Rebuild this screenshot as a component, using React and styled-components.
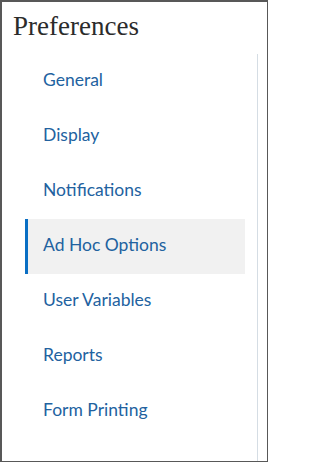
import React from 'react'
import styled, { createGlobalStyle } from 'styled-components'

const GlobalStyle = createGlobalStyle`
    html, body {
        margin: 0;
        padding: 0;
        background: #ffffff;
    }
    * {
        box-sizing: border-box;
    }
`;

const Panel = styled.div`
    width: 268px;
    height: 462px;
    border-style: solid;
    border-color: #585858;
    border-width: 2px 1px 1px 2px;
    display: flex;
    flex-direction: column;
    background: #ffffff;
    overflow: hidden;
`;

const Title = styled.h1`
    margin: 0;
    height: 52px;
    padding: 9px 0 0 11px;
    font-family: "Liberation Serif", "Times New Roman", serif;
    font-weight: normal;
    font-size: 27px;
    line-height: 30px;
    color: #2b2b2b;
`;

const Body = styled.div`
    flex: 1;
    display: flex;
    align-items: stretch;
`;

const Nav = styled.ul`
    list-style: none;
    margin: 0;
    padding: 0 12px 0 23px;
    width: 256px;
    border-right: 1px solid #d5dde4;
`;

const NavItem = styled.li`
    height: 55px;
    display: flex;
    align-items: center;
    padding: 0 0 5px 15px;
    border-left: 3px solid ${p => (p.$active ? '#0a6fc4' : 'transparent')};
    background: ${p => (p.$active ? '#f1f1f1' : 'transparent')};
    font-family: Lato, "Noto Sans", sans-serif;
    font-size: 17.5px;
    color: #22629f;
    cursor: pointer;
`;

const items = [
    'General',
    'Display',
    'Notifications',
    'Ad Hoc Options',
    'User Variables',
    'Reports',
    'Form Printing',
]

function App() {

    const active = 'Ad Hoc Options'

    return (
        <>
            <GlobalStyle />
            <Panel>
                <Title>Preferences</Title>
                <Body>
                    <Nav>
                        {items.map(item => (
                            <NavItem key={item} $active={item === active}>{item}</NavItem>
                        ))}
                    </Nav>
                </Body>
            </Panel>
        </>
    )

}

export default App
